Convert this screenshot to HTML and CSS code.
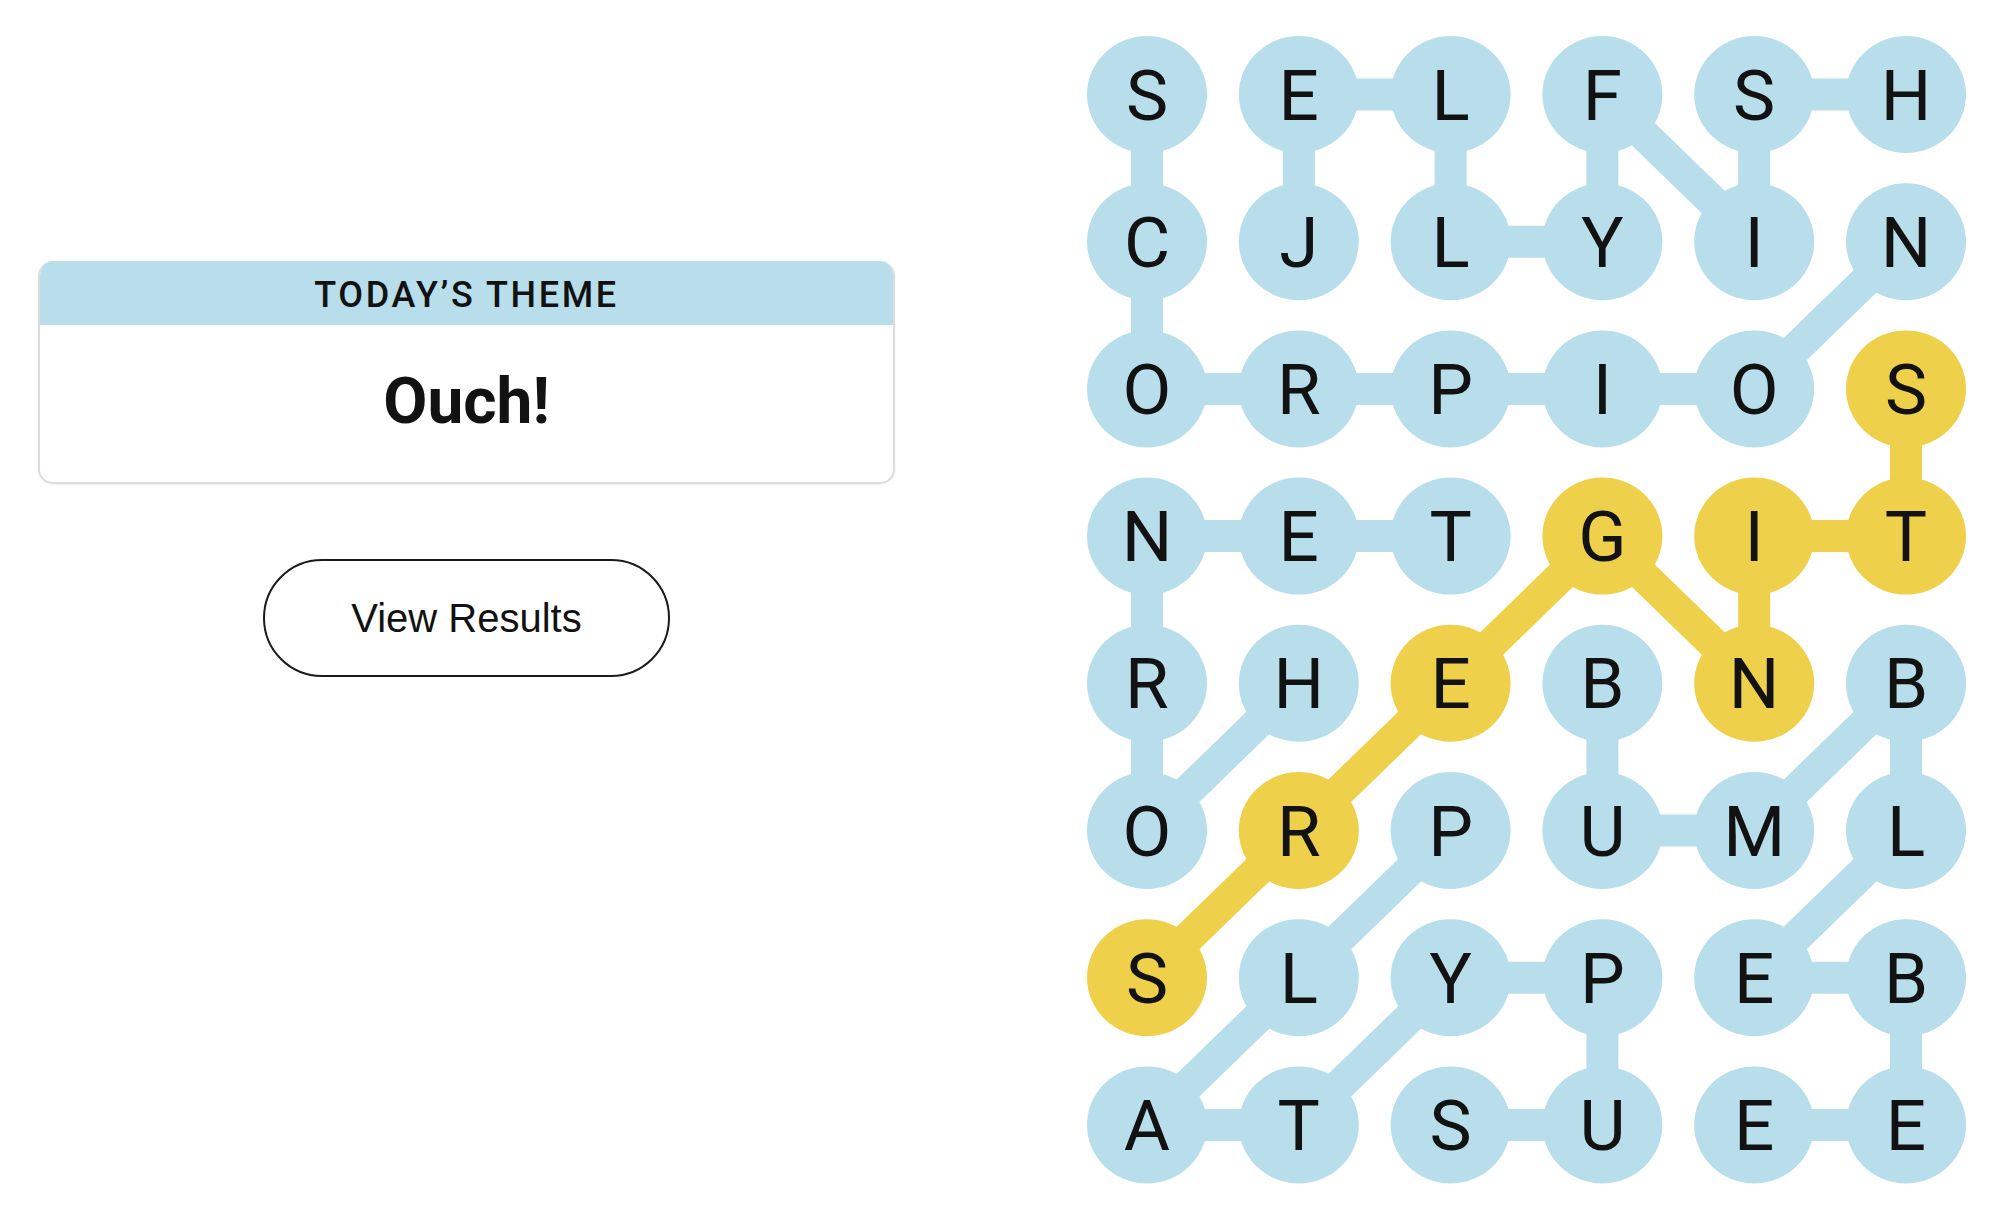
FILE: index.html
```html
<!DOCTYPE html>
<html lang="en">
<head>
    <meta charset="UTF-8">
    <title>Strands</title>
    <link rel="stylesheet" href="styles.css">
</head>
<body>
    <div class="game">
        <div class="side">
            <div class="theme-card">
                <div class="theme-head">TODAY’S THEME</div>
                <div class="theme-body">Ouch!</div>
            </div>
            <button class="results-btn">View Results</button>
        </div>

        <svg class="board" id="board" width="880" height="1150" viewBox="0 0 880 1150">
            <g id="links"></g>
            <g id="cells"></g>
        </svg>
    </div>

    <script>
        const rows = [
            'SELFSH',
            'CJLYIN',
            'ORPIOS',
            'NETGIT',
            'RHEBNB',
            'ORPUML',
            'SLYPEB',
            'ATSUEE'
        ];

        // found words as [row, col] paths
        const words = [
            { spangram: false, path: [[0,0],[1,0],[2,0],[2,1],[2,2],[2,3],[2,4],[1,5]] },
            { spangram: false, path: [[1,1],[0,1],[0,2],[1,2],[1,3],[0,3],[1,4],[0,4],[0,5]] },
            { spangram: false, path: [[4,1],[5,0],[4,0],[3,0],[3,1],[3,2]] },
            { spangram: false, path: [[4,3],[5,3],[5,4],[4,5],[5,5],[6,4],[6,5],[7,5],[7,4]] },
            { spangram: false, path: [[5,2],[6,1],[7,0],[7,1],[6,2],[6,3],[7,3],[7,2]] },
            { spangram: true,  path: [[2,5],[3,5],[3,4],[4,4],[3,3],[4,2],[5,1],[6,0]] }
        ];

        const NS = 'http://www.w3.org/2000/svg';
        const links = document.getElementById('links');
        const cells = document.getElementById('cells');
        const cx = c => 60 + c * 151.8;
        const cy = r => 58.5 + r * 147.2;

        function el(tag, attrs) {
            const node = document.createElementNS(NS, tag);
            for (const k in attrs) node.setAttribute(k, attrs[k]);
            return node;
        }

        const spangramCells = {};
        words.forEach(w => {
            for (let i = 1; i < w.path.length; i++) {
                const [r1, c1] = w.path[i - 1];
                const [r2, c2] = w.path[i];
                links.appendChild(el('line', {
                    x1: cx(c1), y1: cy(r1), x2: cx(c2), y2: cy(r2),
                    class: w.spangram ? 'link gold' : 'link'
                }));
            }
            if (w.spangram) w.path.forEach(([r, c]) => spangramCells[r + '-' + c] = true);
        });

        rows.forEach((row, r) => {
            row.split('').forEach((letter, c) => {
                const gold = spangramCells[r + '-' + c];
                cells.appendChild(el('ellipse', {
                    cx: cx(c), cy: cy(r), rx: 60, ry: 58.5,
                    class: gold ? 'cell gold' : 'cell'
                }));
                const t = el('text', { x: cx(c), y: cy(r) + 25, class: 'letter' });
                t.textContent = letter;
                cells.appendChild(t);
            });
        });
    </script>
</body>
</html>
```

FILE: styles.css
```css
:root {
    --blue: #b7deea;
    --gold: #efd04a;
    --ink: #121212;
}

body {
    margin: 0;
    background: #fff;
    font-family: Roboto, 'Liberation Sans', sans-serif;
    color: var(--ink);
}

.game {
    display: flex;
    align-items: flex-start;
    gap: 192px;
    padding-left: 38px;
}

.side {
    width: 857px;
    margin-top: 261px;
    display: flex;
    flex-direction: column;
    align-items: center;
}

.theme-card {
    width: 100%;
    box-sizing: border-box;
    border: 2px solid #dcdcdc;
    border-top: none;
    border-radius: 15px;
    overflow: hidden;
    box-shadow: 0 1px 2px rgba(0,0,0,0.06);
}

.theme-head {
    background: var(--blue);
    height: 64px;
    line-height: 69px;
    text-align: center;
    font-size: 36px;
    font-weight: 500;
    letter-spacing: 2.6px;
}

.theme-body {
    height: 157px;
    line-height: 154px;
    text-align: center;
    font-size: 64px;
    font-weight: 700;
}

.results-btn {
    margin-top: 75px;
    width: 407px;
    height: 118px;
    background: #fff;
    border: 2px solid #1a1a1a;
    border-radius: 60px;
    font-family: 'Liberation Sans', Arial, sans-serif;
    font-size: 40px;
    color: var(--ink);
}

.board {
    margin-top: 36px;
    display: block;
}

.link {
    stroke: var(--blue);
    stroke-width: 32;
}

.link.gold {
    stroke: var(--gold);
}

.cell {
    fill: var(--blue);
}

.cell.gold {
    fill: var(--gold);
}

.letter {
    font-family: Roboto, 'Liberation Sans', sans-serif;
    font-size: 71px;
    fill: var(--ink);
    text-anchor: middle;
}
```
